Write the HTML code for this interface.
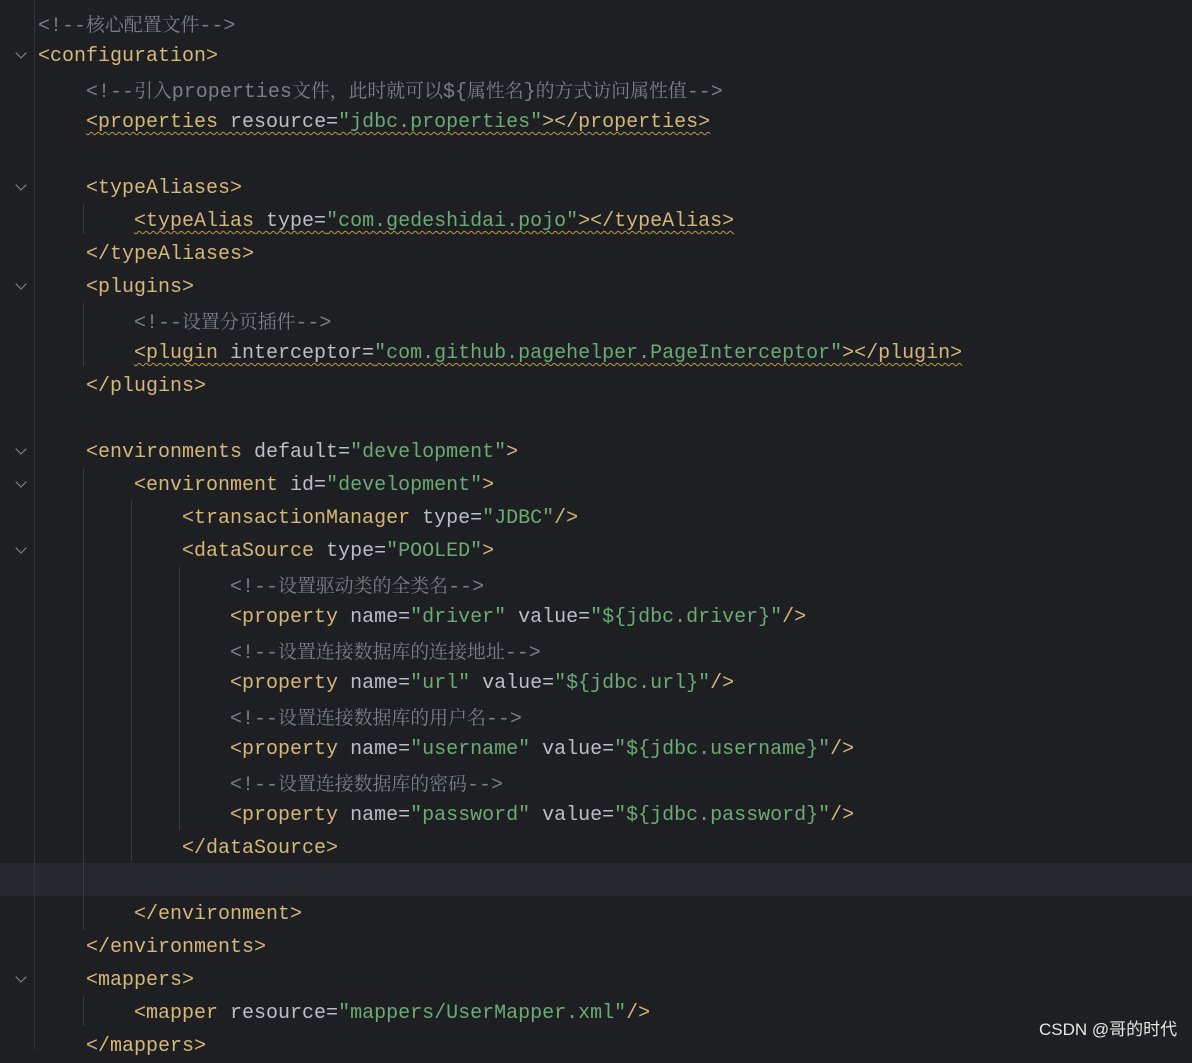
<!DOCTYPE html>
<html><head><meta charset="utf-8"><style>
body{margin:0;width:1192px;height:1050px;background:#1e1f22;overflow:hidden;position:relative;font-family:"Liberation Mono","Noto Sans CJK SC",monospace;font-size:20px;}
.l{position:absolute;left:38px;height:33px;line-height:33px;white-space:pre;color:#bcbec4;margin-top:1px}
.t{color:#d5b778}.a{color:#bcbec4}.s{color:#6aab73}.c{color:#7a7e85}
.c i{font-style:normal;font-family:"Noto Serif CJK SC",serif;font-size:18.9px}
.w{text-decoration:underline wavy #b89a45;text-decoration-thickness:1px;text-underline-offset:4px}
.g{position:absolute;width:1px;background:#3a3c41}
.f{position:absolute;left:17px;width:7px;height:7px;border-right:1.5px solid #8a8d92;border-bottom:1.5px solid #8a8d92;transform:rotate(45deg)}
</style></head><body>
<div style="position:absolute;left:0;top:863px;width:1192px;height:33px;background:#26282e"></div>
<div class="g" style="left:34px;top:0;height:1050px;background:#313337"></div>
<div class="g" style="left:83px;top:204px;height:30px"></div>
<div class="g" style="left:83px;top:303px;height:63px"></div>
<div class="g" style="left:83px;top:468px;height:462px"></div>
<div class="g" style="left:131px;top:501px;height:360px"></div>
<div class="g" style="left:179px;top:567px;height:263px"></div>
<div class="g" style="left:83px;top:996px;height:30px"></div>
<div class="f" style="top:49px"></div>
<div class="f" style="top:181px"></div>
<div class="f" style="top:280px"></div>
<div class="f" style="top:445px"></div>
<div class="f" style="top:478px"></div>
<div class="f" style="top:544px"></div>
<div class="f" style="top:973px"></div>
<div class="l c" style="top:6px">&lt;!--<i>核心配置文件</i>--&gt;</div>
<div class="l t" style="top:39px">&lt;configuration&gt;</div>
<div class="l c" style="top:72px">    &lt;!--<i>引入</i>properties<i>文件，此时就可以</i>${<i>属性名</i>}<i>的方式访问属性值</i>--&gt;</div>
<div class="l" style="top:105px">    <span class="w"><span class="t">&lt;properties</span> resource=<span class="s">"jdbc.properties"</span><span class="t">&gt;&lt;/properties&gt;</span></span></div>
<div class="l t" style="top:171px">    &lt;typeAliases&gt;</div>
<div class="l" style="top:204px">        <span class="w"><span class="t">&lt;typeAlias</span> type=<span class="s">"com.gedeshidai.pojo"</span><span class="t">&gt;&lt;/typeAlias&gt;</span></span></div>
<div class="l t" style="top:237px">    &lt;/typeAliases&gt;</div>
<div class="l t" style="top:270px">    &lt;plugins&gt;</div>
<div class="l c" style="top:303px">        &lt;!--<i>设置分页插件</i>--&gt;</div>
<div class="l" style="top:336px">        <span class="w"><span class="t">&lt;plugin</span> interceptor=<span class="s">"com.github.pagehelper.PageInterceptor"</span><span class="t">&gt;&lt;/plugin&gt;</span></span></div>
<div class="l t" style="top:369px">    &lt;/plugins&gt;</div>
<div class="l" style="top:435px">    <span class="t">&lt;environments</span> default=<span class="s">"development"</span><span class="t">&gt;</span></div>
<div class="l" style="top:468px">        <span class="t">&lt;environment</span> id=<span class="s">"development"</span><span class="t">&gt;</span></div>
<div class="l" style="top:501px">            <span class="t">&lt;transactionManager</span> type=<span class="s">"JDBC"</span><span class="t">/&gt;</span></div>
<div class="l" style="top:534px">            <span class="t">&lt;dataSource</span> type=<span class="s">"POOLED"</span><span class="t">&gt;</span></div>
<div class="l c" style="top:567px">                &lt;!--<i>设置驱动类的全类名</i>--&gt;</div>
<div class="l" style="top:600px">                <span class="t">&lt;property</span> name=<span class="s">"driver"</span> value=<span class="s">"${jdbc.driver}"</span><span class="t">/&gt;</span></div>
<div class="l c" style="top:633px">                &lt;!--<i>设置连接数据库的连接地址</i>--&gt;</div>
<div class="l" style="top:666px">                <span class="t">&lt;property</span> name=<span class="s">"url"</span> value=<span class="s">"${jdbc.url}"</span><span class="t">/&gt;</span></div>
<div class="l c" style="top:699px">                &lt;!--<i>设置连接数据库的用户名</i>--&gt;</div>
<div class="l" style="top:732px">                <span class="t">&lt;property</span> name=<span class="s">"username"</span> value=<span class="s">"${jdbc.username}"</span><span class="t">/&gt;</span></div>
<div class="l c" style="top:765px">                &lt;!--<i>设置连接数据库的密码</i>--&gt;</div>
<div class="l" style="top:798px">                <span class="t">&lt;property</span> name=<span class="s">"password"</span> value=<span class="s">"${jdbc.password}"</span><span class="t">/&gt;</span></div>
<div class="l t" style="top:831px">            &lt;/dataSource&gt;</div>
<div class="l t" style="top:897px">        &lt;/environment&gt;</div>
<div class="l t" style="top:930px">    &lt;/environments&gt;</div>
<div class="l t" style="top:963px">    &lt;mappers&gt;</div>
<div class="l" style="top:996px">        <span class="t">&lt;mapper</span> resource=<span class="s">"mappers/UserMapper.xml"</span><span class="t">/&gt;</span></div>
<div class="l t" style="top:1029px">    &lt;/mappers&gt;</div>
<div style="position:absolute;left:1039px;top:1019px;font-family:'Liberation Sans','Noto Sans CJK SC',sans-serif;font-size:17px;color:#e6e6e6;line-height:22px">CSDN @哥的时代</div>
</body></html>
